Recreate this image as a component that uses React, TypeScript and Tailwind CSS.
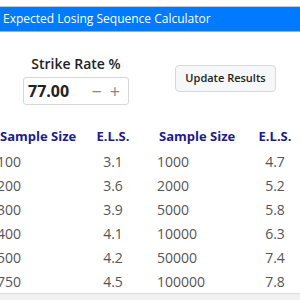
import React from "react";

const rows: [string, string, string, string][] = [
  ["100", "3.1", "1000", "4.7"],
  ["200", "3.6", "2000", "5.2"],
  ["300", "3.9", "5000", "5.8"],
  ["400", "4.1", "10000", "6.3"],
  ["500", "4.2", "50000", "7.4"],
  ["750", "4.5", "100000", "7.8"],
];

export default function App() {
  return (
    <div
      className="w-[300px] h-[300px] overflow-hidden bg-[#f1f1f1]"
      style={{ fontFamily: '"Open Sans", "Noto Sans", sans-serif' }}
    >
      <div className="bg-white h-[294px] border-b border-[#dcdcdc]">
        <div className="h-[6px] bg-white" />
        <div className="h-[26px] bg-[#007bff] border-t border-[#c8c8c8] border-b border-b-[#7fb6f5] flex items-center pl-[3px] text-white text-[12px]">
          Expected Losing Sequence Calculator
        </div>
        <div className="flex items-start h-[93px]">
          <div className="w-[152px] flex flex-col items-start pl-[23px] pt-[22px]">
            <div className="w-[106px] text-center font-semibold text-[14px] leading-[19px] text-[#222]">
              Strike Rate %
            </div>
            <div className="mt-[4px] w-[106px] h-[28px] border border-[#d6d6d6] rounded-[3px] flex items-center pl-[4px] pr-[8px]">
              <span className="font-bold text-[16px] text-[#222] flex-1">77.00</span>
              <span className="text-[#888] text-[18px] leading-none mr-[8px]">−</span>
              <span className="text-[#888] text-[18px] leading-none">+</span>
            </div>
          </div>
          <div className="pl-[23px] pt-[33px]">
            <div className="w-[101px] h-[27px] bg-[#f6f7f8] border border-[#d8d8d8] rounded-[4px] flex items-center justify-center text-[11px] font-semibold text-[#222]">
              Update Results
            </div>
          </div>
        </div>
        <div className="-ml-[3px] grid grid-cols-[91px_50px_112px_50px]">
          <div className="h-[24px] flex items-center pl-[3px] text-[13px] font-bold text-[#1c1c8c] whitespace-nowrap">Sample Size</div>
          <div className="h-[24px] flex items-center justify-center text-[13px] font-bold text-[#1c1c8c]">E.L.S.</div>
          <div className="h-[24px] flex items-center pl-[21px] text-[13px] font-bold text-[#1c1c8c] whitespace-nowrap">Sample Size</div>
          <div className="h-[24px] flex items-center justify-center text-[13px] font-bold text-[#1c1c8c]">E.L.S.</div>
          {rows.map((r, i) => (
            <React.Fragment key={i}>
              <div className="h-[24px] flex items-center text-[14px] text-[#555]">{r[0]}</div>
              <div className="h-[24px] flex items-center justify-center text-[14px] text-[#555]">{r[1]}</div>
              <div className="h-[24px] flex items-center pl-[19px] text-[14px] text-[#555]">{r[2]}</div>
              <div className="h-[24px] flex items-center justify-center text-[14px] text-[#555]">{r[3]}</div>
            </React.Fragment>
          ))}
        </div>
      </div>
    </div>
  );
}
